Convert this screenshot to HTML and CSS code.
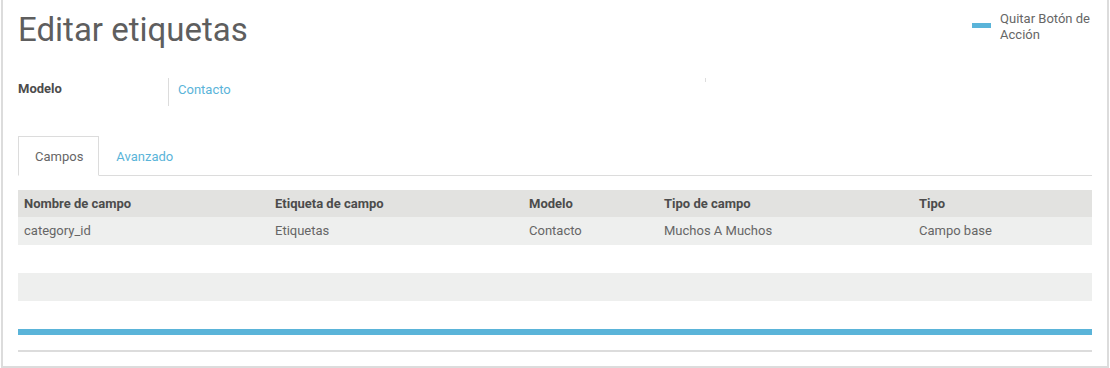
FILE: index.html
```html
<!DOCTYPE html>
<html lang="es">
<head>
    <meta charset="UTF-8">
    <title>Editar etiquetas</title>
    <link rel="stylesheet" href="styles.css">
</head>
<body>
    <div class="sheet">
        <div class="sheet__head">
            <h1 class="sheet__title">Editar etiquetas</h1>
            <button class="action-btn"><span class="action-btn__bar"></span><span>Quitar Botón de<br>Acción</span></button>
        </div>

        <div class="field">
            <div class="field__label">Modelo</div>
            <div class="field__value"><a href="#">Contacto</a></div>
            <div class="field__mark"></div>
        </div>

        <ul class="tabs">
            <li><a class="tabs__link _active" href="#">Campos</a></li>
            <li><a class="tabs__link" href="#">Avanzado</a></li>
        </ul>

        <table class="grid">
            <thead>
                <tr>
                    <th>Nombre de campo</th>
                    <th>Etiqueta de campo</th>
                    <th>Modelo</th>
                    <th>Tipo de campo</th>
                    <th>Tipo</th>
                </tr>
            </thead>
            <tbody>
                <tr>
                    <td>category_id</td>
                    <td>Etiquetas</td>
                    <td>Contacto</td>
                    <td>Muchos A Muchos</td>
                    <td>Campo base</td>
                </tr>
            </tbody>
        </table>

        <div class="grid-empty"></div>

        <div class="progress"></div>
        <div class="sheet__foot"></div>
    </div>
</body>
</html>
```

FILE: styles.css
```css
* {
    box-sizing: border-box;
}

body {
    margin: 0;
    font-family: Roboto, "Liberation Sans", sans-serif;
    font-size: 13px;
    color: #666;
    background: #fff;
}

a {
    color: #5ab4d9;
    text-decoration: none;
}

/* sheet */
.sheet {
    margin: 0 1px;
    height: 368px;
    padding: 0 15px;
    border: 2px solid #dcdcdc;
    border-top: none;
}

.sheet__head {
    display: flex;
    justify-content: space-between;
    align-items: flex-start;
}

.sheet__title {
    margin: 9px 0 0;
    font-size: 33px;
    font-weight: 400;
    color: #5e5e5e;
    line-height: 42px;
}

.action-btn {
    display: flex;
    align-items: flex-start;
    gap: 9px;
    margin: 11px 2px 0 0;
    padding: 0;
    border: none;
    background: none;
    font-family: inherit;
    font-size: 13px;
    line-height: 16px;
    color: #666;
    text-align: left;
}

.action-btn__bar {
    width: 19px;
    height: 5px;
    margin-top: 12px;
    background: #5ab4d9;
}

/* field */
.field {
    display: flex;
    align-items: flex-start;
    margin-top: 27px;
    height: 28px;
}

.field__label {
    width: 150px;
    padding-top: 2px;
    font-weight: 700;
    color: #4c4c4c;
    line-height: 18px;
}

.field__value {
    height: 28px;
    padding: 3px 0 0 9px;
    border-left: 1px solid #dcdcdc;
    line-height: 18px;
    width: 537px;
}

.field__mark {
    width: 1px;
    height: 4px;
    background: #ddd;
}

/* tabs */
.tabs {
    display: flex;
    margin: 30px 0 0;
    padding: 0;
    list-style: none;
    border-bottom: 1px solid #dcdcdc;
}

.tabs__link {
    display: block;
    height: 40px;
    margin-bottom: -1px;
    padding: 11px 15px 0 16px;
    border: 1px solid transparent;
    line-height: 18px;
}

.tabs__link._active {
    color: #666;
    background: #fff;
    border-color: #dcdcdc;
    border-bottom-color: #fff;
}

/* grid */
.grid {
    width: 100%;
    margin-top: 14px;
    border-collapse: collapse;
}

.grid th,
.grid td {
    height: 27px;
    padding: 0 6px;
    text-align: left;
    line-height: 18px;
}

.grid th {
    background: #e2e2e0;
    color: #4c4c4c;
    font-weight: 700;
}

.grid td {
    height: 28px;
    background: #eeefee;
}

.grid th:nth-child(1) { width: 251px; }
.grid th:nth-child(2) { width: 254px; }
.grid th:nth-child(3) { width: 135px; }
.grid th:nth-child(4) { width: 255px; }

.grid-empty {
    height: 28px;
    margin-top: 28px;
    background: #eeefee;
}

.progress {
    height: 6px;
    margin-top: 28px;
    background: #5ab4d9;
}

.sheet__foot {
    margin-top: 15px;
    border-top: 2px solid #dcdcdc;
}
```
